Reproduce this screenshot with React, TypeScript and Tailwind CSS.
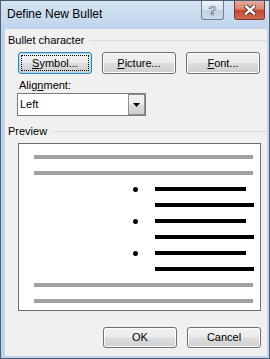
import React from "react";

const btn =
  "h-full w-[74px] rounded-[3px] border border-[#707070] bg-[linear-gradient(#f2f2f2_0%,#ebebeb_48%,#dddddd_52%,#cfcfcf_100%)] shadow-[inset_0_0_0_1px_#fcfcfc] flex items-center justify-center text-[11px] text-black";

const Heading = ({ label }: { label: string }) => (
  <div className="flex items-center h-[14px] pl-[3px]">
    <span className="text-[11px] leading-[14px] text-black">{label}</span>
    <div className="flex-1 ml-[5px] h-px bg-[#d5dfe5]" />
  </div>
);

const Gray = () => <div className="h-[4px] w-[219px] ml-[15px] bg-[#a0a0a0]" />;

const Bulleted = () => (
  <>
    <div className="flex items-center h-[4px]">
      <div className="w-[114px]" />
      <div className="w-[5px] h-[5px] rounded-full bg-black" />
      <div className="w-[17px]" />
      <div className="h-[4px] w-[91px] bg-black" />
    </div>
    <div className="h-[4px] w-[99px] ml-[136px] bg-black" />
  </>
);

export default function App() {
  return (
    <div
      className="w-[270px] h-[359px] border border-[#4b5f76] bg-[#bfd3ec] flex flex-col"
      style={{ fontFamily: '"Liberation Sans", Arial, sans-serif' }}
    >
      {/* title bar */}
      <div className="h-[28px] flex items-start bg-[linear-gradient(#d6e4f3,#bfd3ec)]">
        <div className="pl-[6px] pt-[6px] text-[12px] leading-[15px] text-black flex-1">Define New Bullet</div>
        <div className="flex items-start gap-[10px] mr-[4px]">
          <div className="w-[23px] h-[19px] rounded-b-[3px] border border-t-0 border-[#6b7d93] bg-[linear-gradient(#eef3f9_0%,#d8e3ef_50%,#c3d2e3_52%,#cbdae9_100%)] flex items-center justify-center">
            <span
              className="text-[13px] font-bold leading-none text-white"
              style={{ WebkitTextStroke: "0.6px #3f4f63" }}
            >
              ?
            </span>
          </div>
          <div className="w-[31px] h-[19px] rounded-b-[3px] border border-t-0 border-[#6f3a36] bg-[linear-gradient(#e6a99d_0%,#d88571_45%,#c4492f_52%,#d26a4e_100%)] flex items-center justify-center">
            <svg width="12" height="10" viewBox="0 0 12 10">
              <path d="M2 1.5 L10 8.5 M10 1.5 L2 8.5" stroke="#4a2a25" strokeWidth="4.2" strokeLinecap="square" />
              <path d="M2 1.5 L10 8.5 M10 1.5 L2 8.5" stroke="#ffffff" strokeWidth="2.4" strokeLinecap="square" />
            </svg>
          </div>
        </div>
      </div>

      {/* client area */}
      <div className="flex-1 ml-[4px] mr-[2px] mb-[2px] bg-[#f0f0f0] flex flex-col">
        <div className="mt-[4px]">
          <Heading label="Bullet character" />
        </div>

        <div className="mt-[5px] h-[22px] pl-[13px] flex gap-[10px]">
          <div className="h-full w-[74px] rounded-[3px] border border-[#3c7fb1] bg-[linear-gradient(#f2f2f2_0%,#ebebeb_48%,#dddddd_52%,#cfcfcf_100%)] shadow-[inset_0_0_0_1px_#9fdcf9] p-[2px]">
            <div className="h-full border border-dotted border-black flex items-center justify-center text-[11px] text-black">
              <span>
                <span className="underline">S</span>ymbol...
              </span>
            </div>
          </div>
          <div className={btn}>
            <span>
              <span className="underline">P</span>icture...
            </span>
          </div>
          <div className={btn}>
            <span>
              <span className="underline">F</span>ont...
            </span>
          </div>
        </div>

        <div className="mt-[4px] h-[15px] pl-[14px] text-[11px] leading-[15px] text-black">
          Alig<span className="underline">n</span>ment:
        </div>

        <div className="ml-[12px] w-[129px] h-[23px] border border-[#7a7a7a] bg-white flex items-center">
          <span className="flex-1 pl-[2px] text-[11px] text-black">Left</span>
          <div className="w-[17px] h-[21px] border border-[#8e8e8e] bg-[linear-gradient(#f2f2f2_0%,#ebebeb_48%,#dddddd_52%,#cfcfcf_100%)] flex items-center justify-center">
            <svg width="7" height="4" viewBox="0 0 7 4">
              <path d="M0 0 H7 L3.5 4 Z" fill="#000" />
            </svg>
          </div>
        </div>

        <div className="mt-[8px]">
          <Heading label="Preview" />
        </div>

        <div className="mt-[5px] ml-[13px] w-[243px] h-[168px] border border-[#6e6e6e] bg-white pt-[11px] flex flex-col gap-[12px]">
          <Gray />
          <Gray />
          <Bulleted />
          <Bulleted />
          <Bulleted />
          <Gray />
          <Gray />
        </div>

        <div className="mt-[16px] h-[21px] pr-[6px] flex justify-end gap-[10px]">
          <div className={btn}>OK</div>
          <div className={btn}>Cancel</div>
        </div>
      </div>
    </div>
  );
}
